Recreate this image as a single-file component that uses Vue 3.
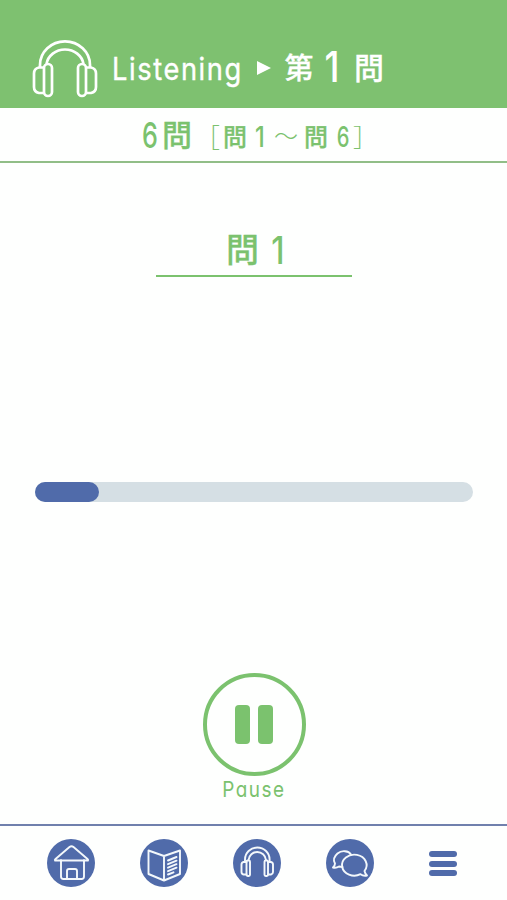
<script setup>
const progress = 14.7
</script>

<template>
  <main class="screen">
    <header class="top">
      <svg class="phones" viewBox="0 0 66 60" fill="none" stroke="#fff" stroke-width="2.7" stroke-linejoin="round">
        <path d="M8 28V26A25 23.600 0 0 1 58 26V28M14.500 25A18.700 17 0 0 1 51.500 25" />
        <rect x="12" y="25" width="8" height="32" rx="4" />
        <rect x="46" y="25" width="8" height="32" rx="4" />
        <path d="M12 28.500H7Q2 29.500 2 34.500V48Q2 53 7 54H12M54 28.500H59Q64 29.500 64 34.500V48Q64 53 59 54H54" />
      </svg>
      <span class="listening">Listening</span>
      <svg class="arrow" viewBox="0 0 14 14"><path d="M0 0L14 7L0 14Z" fill="#fff" /></svg>
      <span class="kanji dai">第</span>
      <span class="num one">1</span>
      <span class="kanji mon">問</span>
    </header>

    <section class="summary">
      <span class="num six">6</span>
      <span class="kanji count">問</span>
      <span class="bracket open">［</span>
      <span class="kanji small">問</span>
      <span class="num first">1</span>
      <span class="wave">～</span>
      <span class="kanji small">問</span>
      <span class="num last">6</span>
      <span class="bracket close">］</span>
    </section>

    <h1 class="title"><span class="kanji">問</span><span class="num">1</span></h1>

    <div class="track"><div class="fill" :style="{ width: progress + '%' }"></div></div>

    <button class="pause">
      <span class="ring"><i></i><i></i></span>
      <span class="label">Pause</span>
    </button>

    <nav class="nav">
      <a class="disc">
        <svg viewBox="0 0 48 48">
          <path d="M14 21V37.500Q14 40 16.500 40H34.500Q37 40 37 37.500V21M8 21.500Q7.500 21 8.500 20L22.500 8Q24.500 6.500 26.500 8L40.500 20Q41.500 21 41 21.500ZM20 40V32Q20 30 22 30H28Q30 30 30 32V40" />
        </svg>
      </a>
      <a class="disc">
        <svg viewBox="0 0 48 48">
          <path d="M24 17L8.5 11.500V35L24 41.500L40 35V11.500ZM24 17V41" />
          <path d="M28 21.500L36.500 18M28 25.200L36.500 21.700M28 28.700L36.500 25.200M28 32.200L36.500 28.700M28 35.500L33.5 33.300" />
        </svg>
      </a>
      <a class="disc">
        <svg viewBox="0 0 48 48">
          <path d="M12 22V20.5A12.300 12 0 0 1 36.600 20.5V22M15.500 21A8.800 9 0 0 1 33 21" />
          <rect x="13.500" y="21.500" width="3.500" height="15.500" rx="1.2" />
          <rect x="31.500" y="21.500" width="3.500" height="15.500" rx="1.2" />
          <path d="M13.500 23H10.500Q8.500 23.500 8.500 25.500V33Q8.500 35 10.500 35.5H13.500M35 23H38Q40 23.500 40 25.500V33Q40 35 38 35.5H35" />
        </svg>
      </a>
      <a class="disc">
        <svg viewBox="0 0 48 48">
          <path d="M25 15.5C22.5 11.5 15.5 11 11.500 14.500C7.500 18 7.500 22 9 24.500C9 26 8 27.500 7 28.500C9.500 29 11.500 28.500 13 27.500L16.500 28" />
          <path d="M38.500 32A12.300 10.500 0 1 0 34.500 35.200C36 36.300 38.500 37 41 36.500C39.500 35 38.800 33.500 38.500 32Z" />
        </svg>
      </a>
      <a class="menu"><i></i><i></i><i></i></a>
    </nav>
  </main>
</template>

<style>
body { margin: 0; background: #fff; }
</style>

<style scoped>
.screen {
  box-sizing: border-box;
  width: 507px;
  height: 900px;
  display: flex;
  flex-direction: column;
  overflow: hidden;
  background: #fefffe;
  color: #7bc26e;
  font-family: Inter, "Noto Sans CJK JP", sans-serif;
}
.top, .summary, .title { display: flex; align-items: flex-start; white-space: nowrap; }
.top > *, .summary > * { flex: none; }
.kanji { font-family: "Noto Sans CJK JP", sans-serif; font-weight: 500; text-align: center; -webkit-text-stroke: .3px currentColor; }
.num { font-family: Inter, sans-serif; font-weight: 500; display: flex; justify-content: center; transform: scaleX(.84); }
.top { box-sizing: border-box; height: 108px; background: #7ec170; color: #fff; padding: 39px 0 0 32px; }
.phones { width: 66px; height: 60px; }
.listening { width: 130px; margin: 10px 0 0 14px; font-size: 31px; line-height: 40px; letter-spacing: 1.8px; transform: scaleX(.88); transform-origin: left; -webkit-text-stroke: .4px currentColor; }
.arrow { width: 14px; height: 14px; margin: 22px 0 0 15px; }
.dai { width: 30px; margin: 7px 0 0 13px; font-size: 29px; line-height: 40px; }
.one { width: 20px; margin: 7px 0 0 8px; font-size: 43px; line-height: 40px; }
.mon { width: 30px; margin: 7px 0 0 12px; font-size: 30px; line-height: 40px; }

.summary { box-sizing: border-box; height: 55px; padding: 7px 0 0 141px; border-bottom: 2px solid #91be87; flex: none; }
.summary > * { line-height: 40px; }
.six { width: 18px; font-size: 35px; transform: scaleX(.72); }
.count { width: 30px; margin-left: 3px; font-size: 30px; margin-top: -2px; }
.small { width: 24px; font-size: 24px; margin-top: 1px; }
.bracket { width: 12px; font-family: "Noto Sans CJK JP", sans-serif; font-size: 25px; font-weight: 300; margin-top: 1px; display: flex; }
.open { margin-left: 16px; justify-content: flex-end; margin-right: 3px; }
.close { margin-left: 3px; }
.first { width: 14px; font-size: 28px; margin: 2px 7px 0 6px; }
.wave { width: 24px; font-size: 24px; font-weight: 300; margin: 2px 6px 0 0; }
.last { width: 14px; font-size: 28px; margin: 2px 0 0 8px; transform: scaleX(.72); }

.title { box-sizing: border-box; width: 196px; height: 52px; margin: 62px 0 0 156px; padding-left: 70px; border-bottom: 2px solid #7bc26e; font-weight: 500; flex: none; }
.title span { line-height: 50px; }
.title .kanji { width: 33px; font-size: 33px; margin-top: -2px; }
.title .num { width: 20px; margin-left: 9px; font-size: 38px; }

.track { width: 438px; height: 20px; margin: 205px 0 0 35px; border-radius: 10px; background: #d5dfe4; flex: none; }
.fill { height: 20px; border-radius: 10px; background: #506baa; }

.pause { display: flex; flex-direction: column; align-items: center; width: 104px; margin: 171px 0 0 202px; padding: 0; border: 0; background: none; color: inherit; font-family: Inter, sans-serif; flex: none; }
.ring { box-sizing: border-box; width: 103px; height: 103px; border: 4px solid #7bc26e; border-radius: 50%; display: flex; align-items: center; justify-content: center; gap: 8px; }
.ring i { width: 15px; height: 39px; border-radius: 4px; background: #7bc26e; }
.label { font-size: 22px; line-height: 27px; letter-spacing: 1.8px; font-feature-settings: "cv11"; transform: scaleX(.86); margin-left: -1px; }

.nav { box-sizing: border-box; height: 76px; margin-top: auto; padding: 13px 0 0 47px; border-top: 2px solid #7080ad; display: flex; gap: 45px; flex: none; }
.disc { width: 48px; height: 48px; border-radius: 50%; background: #506baa; }
.disc svg { display: block; width: 48px; height: 48px; fill: none; stroke: #f3f8fb; stroke-width: 1.9; stroke-linecap: round; stroke-linejoin: round; }
.menu { display: flex; flex-direction: column; gap: 3.5px; width: 28px; margin: 12px 0 0 10px; }
.menu i { height: 6px; border-radius: 3px; background: #506baa; }
</style>
